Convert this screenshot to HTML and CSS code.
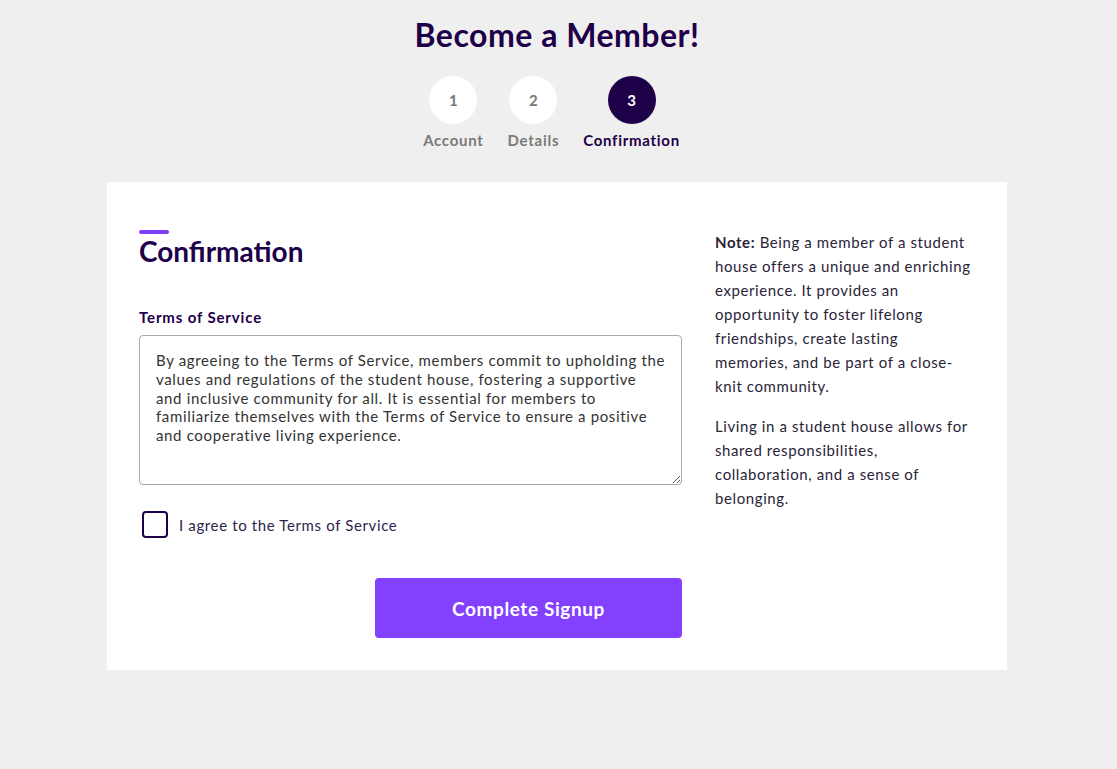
FILE: index.html
```html
<!DOCTYPE html>
<html lang="en">
<head>
<meta charset="utf-8">
<title>Become a Member!</title>
<link rel="stylesheet" href="styles.css">
</head>
<body>
<main class="page">
  <h1 class="page-title">Become a Member!</h1>
  <ol class="steps">
    <li class="step"><span class="step-circle">1</span><span class="step-label">Account</span></li>
    <li class="step"><span class="step-circle">2</span><span class="step-label">Details</span></li>
    <li class="step step-active"><span class="step-circle">3</span><span class="step-label">Confirmation</span></li>
  </ol>
  <section class="card">
    <div class="form-col">
      <div class="accent"></div>
      <h2 class="section-title">Confirmation</h2>
      <label class="field-label" for="tos">Terms of Service</label>
      <textarea id="tos" class="tos" readonly>By agreeing to the Terms of Service, members commit to upholding the values and regulations of the student house, fostering a supportive and inclusive community for all. It is essential for members to familiarize themselves with the Terms of Service to ensure a positive and cooperative living experience.</textarea>
      <label class="agree">
        <span class="checkbox"></span>
        <span class="agree-text">I agree to the Terms of Service</span>
      </label>
      <div class="actions">
        <button class="submit" type="button">Complete Signup</button>
      </div>
    </div>
    <aside class="note">
      <p><b class="note-lead">Note:</b> Being a member of a student house offers a unique and enriching experience. It provides an opportunity to foster lifelong friendships, create lasting memories, and be part of a close-knit community.</p>
      <p>Living in a student house allows for shared responsibilities, collaboration, and a sense of belonging.</p>
    </aside>
  </section>
</main>
</body>
</html>
```

FILE: styles.css
```css
* { box-sizing: border-box; }
html, body { margin: 0; padding: 0; }
body {
  background: #efefef;
  font-family: "Lato", "Open Sans", sans-serif;
  color: #2a2438;
}
.page {
  display: flex;
  flex-direction: column;
  align-items: center;
  padding-top: 15px;
  padding-right: 3px;
}
.page-title {
  margin: 0;
  font-size: 32px;
  line-height: 40px;
  font-weight: 700;
  letter-spacing: 0.5px;
  color: #1e0049;
}
.steps {
  list-style: none;
  margin: 21px 11px 0 0;
  padding: 0;
  display: flex;
  gap: 24px;
}
.step {
  display: flex;
  flex-direction: column;
  align-items: center;
}
.step-circle {
  width: 48px;
  height: 48px;
  border-radius: 50%;
  background: #fff;
  color: #777;
  font-weight: 700;
  font-size: 15px;
  display: flex;
  align-items: center;
  justify-content: center;
}
.step-label {
  margin-top: 6px;
  font-size: 15px;
  line-height: 20px;
  font-weight: 700;
  letter-spacing: 0.72px;
  color: #7a7a7a;
}
.step-active .step-circle { background: #1e0049; color: #fff; }
.step-active .step-label { color: #1e0049; }

.card {
  margin-top: 32px;
  width: 900px;
  background: #fff;
  padding: 48px 32px 32px;
  display: flex;
  gap: 33px;
}
.form-col {
  flex: 1;
  display: flex;
  flex-direction: column;
}
.accent {
  width: 30px;
  height: 4px;
  border-radius: 2px;
  background: #7f3fff;
}
.section-title {
  margin: 0;
  font-size: 28px;
  line-height: 35px;
  font-weight: 700;
  color: #1e0049;
}
.field-label {
  margin-top: 38px;
  font-size: 15px;
  line-height: 20px;
  font-weight: 700;
  letter-spacing: 0.85px;
  color: #1e0049;
}
.tos {
  margin-top: 8px;
  width: 100%;
  height: 150px;
  border: 1px solid #a9a9a9;
  border-radius: 4px;
  padding: 15px 16px;
  font-family: "Lato", "Open Sans", sans-serif;
  font-size: 15px;
  line-height: 18.75px;
  letter-spacing: 0.65px;
  color: #333;
  resize: vertical;
}
.agree {
  margin-top: 26px;
  display: flex;
  align-items: center;
  gap: 11px;
  padding-left: 3px;
}
.checkbox {
  width: 26px;
  height: 27px;
  border: 2px solid #1e0049;
  border-radius: 4px;
}
.agree-text {
  font-size: 15px;
  letter-spacing: 0.63px;
  color: #2e1f4a;
}
.actions {
  margin-top: 40px;
  display: flex;
  justify-content: flex-end;
}
.submit {
  width: 307px;
  height: 60px;
  border: 0;
  border-radius: 4px;
  background: #8340ff;
  color: #fff;
  font-family: "Lato", "Open Sans", sans-serif;
  font-size: 19px;
  font-weight: 700;
  letter-spacing: 0.6px;
}
.note {
  width: 260px;
  font-size: 15px;
  line-height: 24px;
  letter-spacing: 0.6px;
  color: #2a2438;
}
.note p { margin: 0 0 16px; }
.note-lead { font-weight: 700; }
```
